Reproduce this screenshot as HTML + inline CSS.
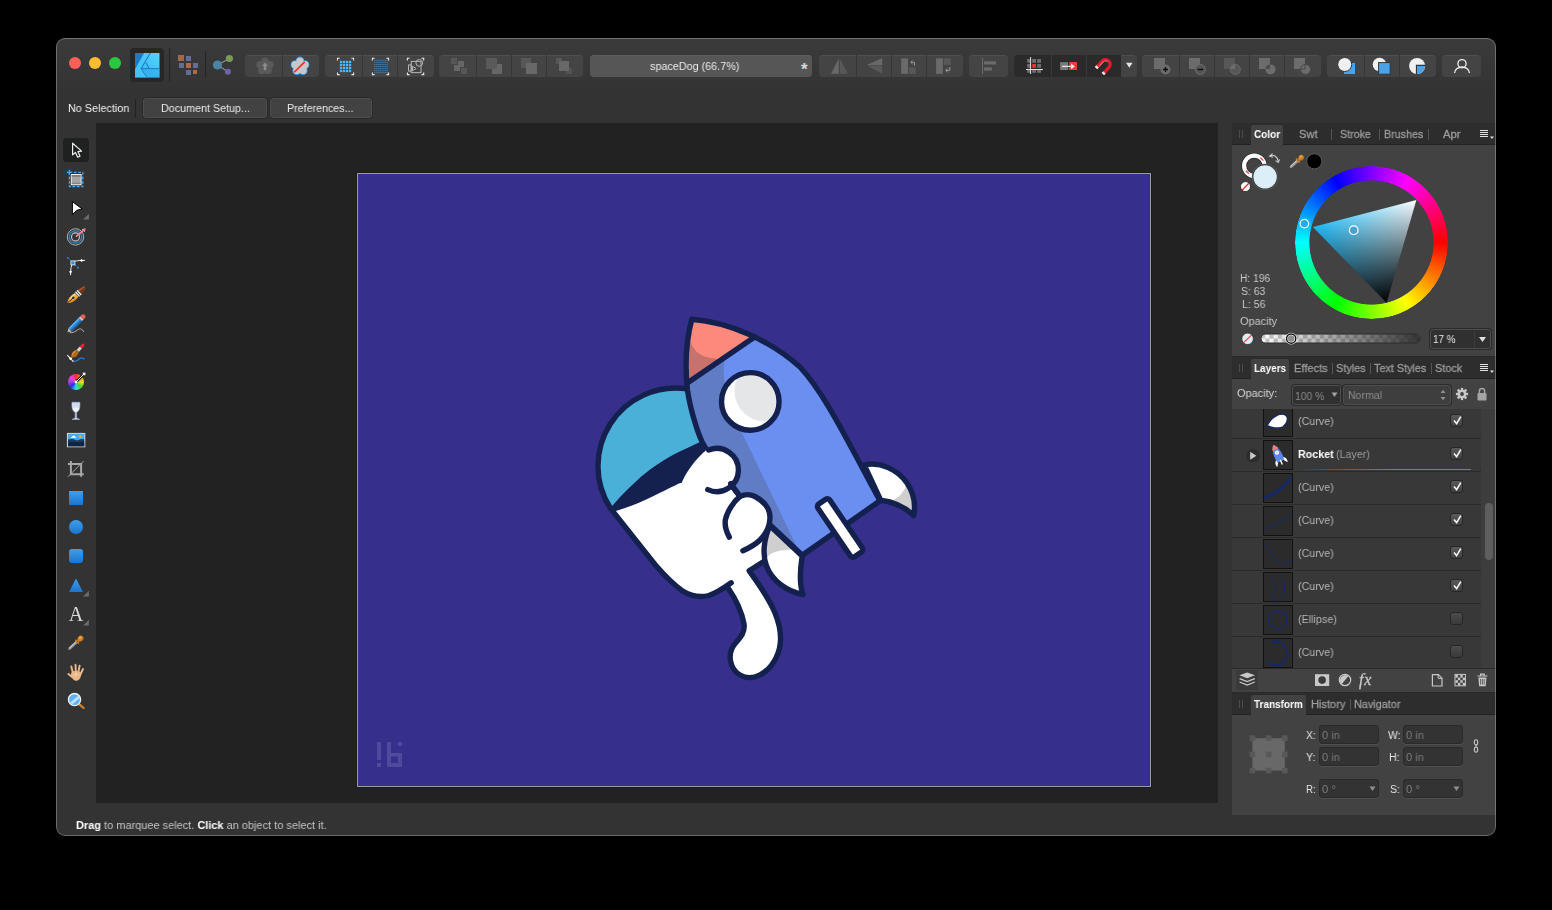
<!DOCTYPE html>
<html><head><meta charset="utf-8">
<style>
*{box-sizing:border-box;margin:0;padding:0}
html,body{width:1552px;height:910px;background:#000;overflow:hidden}
body{font-family:"Liberation Sans",sans-serif;font-size:11px;color:#d4d4d4;position:relative}
.abs{position:absolute}
svg{will-change:transform}
#win{position:absolute;left:56px;top:38px;width:1440px;height:798px;border-radius:9px;background:#333;overflow:hidden}
#win:after{content:"";position:absolute;inset:0;border-radius:9px;border:1px solid rgba(255,255,255,.28);pointer-events:none;z-index:50}
/* all children of #pg use page coords via translate */
#pg{position:absolute;left:-56px;top:-38px;width:1552px;height:910px}
#tbar{left:56px;top:38px;width:1440px;height:56px;background:linear-gradient(#3b3b3b,#333)}
.tl{width:12px;height:12px;border-radius:50%;top:57px}
.grp{top:55px;height:22px;background:#434343;border-radius:4px;box-shadow:inset 0 1px 0 rgba(255,255,255,.06)}
.dv{top:55px;width:1px;height:22px;background:#363636}
.btn{top:98px;height:20px;background:#424242;border:1px solid #4d4d4d;border-radius:3px;color:#ececec;text-align:center;line-height:18px;font-size:11px;box-shadow:0 0 0 1px #2a2a2a}
#canvas{left:96px;top:123px;width:1122px;height:680px;background:#222}
#artb{left:357px;top:173px;width:794px;height:614px;background:#362f8c;border:1px solid #9c9ca0;box-shadow:0 0 0 1px #1a1a1a}
#rp{left:1232px;top:123px;width:264px;height:692px;background:#424242}
.tabbar{left:1232px;width:264px;height:22px;background:#2d2d2d;border-bottom:1px solid #222}
.tab{height:20px;background:#424242;color:#fff;font-weight:bold}
.tt{font-size:11px;color:#a9a9a9;white-space:nowrap;line-height:12px}
.tsep{width:1px;height:11px;background:#555}
.inp{background:#303030;border:1px solid #4e4e4e;border-radius:3px;box-shadow:0 0 0 1px #2b2b2b;color:#8a8a8a;font-size:11px;line-height:17px;padding-left:4px;white-space:nowrap}
.tx{font-size:11.25px;line-height:12px;white-space:pre;will-change:transform;transform-origin:0 0}
.lbl{font-size:11px;color:#d0d0d0;white-space:nowrap;line-height:12px}
.row{left:1232px;width:249px;height:33px;border-bottom:1px solid #2c2c2c}
.th{left:1263px;width:30px;height:30px;background:#2b2b2b;border:1px solid #111}
.ck{left:1450px;width:13px;height:13px;border-radius:3px;background:linear-gradient(#5a5a5a,#404040);border:1px solid #262626}
</style></head><body>
<div id="win"><div id="pg">
<div id="tbar" class="abs"></div>
<div class="abs tl" style="left:69px;background:#fe5f57"></div>
<div class="abs tl" style="left:89px;background:#febc2e"></div>
<div class="abs tl" style="left:109px;background:#28c840"></div>
<!--TBS--><div class="abs" style="left:130px;top:48px;width:34px;height:34px;background:#272727;border-radius:4px"></div>
<div class="abs" style="left:169px;top:48px;width:1px;height:34px;background:#242424"></div>
<div class="abs" style="left:205px;top:51px;width:1px;height:27px;background:#242424"></div>
<div class="abs grp" style="left:245px;width:74px;background:#444"></div>
<div class="abs dv" style="left:282px"></div>
<div class="abs grp" style="left:325px;width:109px;background:#444"></div>
<div class="abs dv" style="left:362px"></div>
<div class="abs dv" style="left:397px"></div>
<div class="abs grp" style="left:439px;width:144px;background:#444"></div>
<div class="abs dv" style="left:476px"></div>
<div class="abs dv" style="left:511px"></div>
<div class="abs dv" style="left:546px"></div>
<div class="abs grp" style="left:590px;width:222px;background:#565656;color:#ececec;font-size:11px;line-height:22px;text-align:center"><span class="abs" style="right:4.5px;top:3.5px;font-size:17px;color:#d8d8d8;line-height:22px;font-weight:bold">*</span></div>
<div class="abs grp" style="left:819px;width:144px;background:#444"></div>
<div class="abs dv" style="left:856px"></div>
<div class="abs dv" style="left:891px"></div>
<div class="abs dv" style="left:926px"></div>
<div class="abs grp" style="left:969px;width:39px;background:#444"></div>
<div class="abs grp" style="left:1014px;width:123px;background:#434343"></div><div class="abs" style="left:1014px;top:55px;width:107px;height:22px;background:#2a2a2a;border-radius:4px 0 0 4px"></div>
<div class="abs dv" style="left:1051px;background:#3a3a3a"></div>
<div class="abs dv" style="left:1086px;background:#3a3a3a"></div>
<div class="abs grp" style="left:1142px;width:179px;background:#444"></div>
<div class="abs dv" style="left:1179px"></div>
<div class="abs dv" style="left:1214px"></div>
<div class="abs dv" style="left:1249px"></div>
<div class="abs dv" style="left:1284px"></div>
<div class="abs grp" style="left:1327px;width:109px;background:#444"></div>
<div class="abs dv" style="left:1364px"></div>
<div class="abs dv" style="left:1399px"></div>
<div class="abs grp" style="left:1442px;width:39px;background:#444"></div>
<svg class="abs" style="left:0;top:0" width="1552" height="95" viewBox="0 0 1552 95">
<defs><linearGradient id="afg" x1="0" y1="1" x2="1" y2="0"><stop offset="0" stop-color="#2fb2ef"/><stop offset="1" stop-color="#55d4fc"/></linearGradient></defs>
<g transform="translate(135,53)"><rect width="24.5" height="24.5" fill="url(#afg)"/><path d="M0,0H9.2L0,16.5Z" fill="#1c7bc9"/><path d="M9.2,0H15.2L6.1,15.7L12,24.5H0V16.5Z" fill="#4ccbfb" opacity=".55"/><path d="M15.2,0L6.1,15.7L12,24.5M6.1,15.7H24.5M10.8,9.6L14.1,15.3" fill="none" stroke="#1a6fbe" stroke-width="1"/><path d="M6.1,15.7H24.5V24.5H12Z" fill="#2aaaea" opacity=".5"/></g>
<rect x="178" y="55" width="6" height="6" fill="#a5664a"/>
<rect x="186" y="56" width="5" height="5" fill="#666c98"/>
<rect x="179" y="63" width="5" height="5" fill="#666c98"/>
<rect x="186" y="63" width="5" height="5" fill="#b0694a"/>
<rect x="193" y="63" width="5" height="5" fill="#666c98"/>
<rect x="186" y="70" width="5" height="5" fill="#666c98"/>
<rect x="193" y="70" width="4" height="4" fill="#b0694a"/>
<path d="M217.5,65L229.4,58.5M217.5,65L227.9,71.8" stroke="#a8a8a8" stroke-width="1"/><circle cx="217.5" cy="65" r="4.6" fill="#4a84a3"/><circle cx="229.4" cy="58.5" r="3.6" fill="#7a9a5c"/><circle cx="227.9" cy="71.8" r="3" fill="#6b65a8"/>
<g fill="#5a5a5a"><circle cx="265.0" cy="61.1" r="3.7"/><circle cx="269.9" cy="64.7" r="3.7"/><circle cx="268.1" cy="70.5" r="3.7"/><circle cx="261.9" cy="70.5" r="3.7"/><circle cx="260.1" cy="64.7" r="3.7"/><circle cx="265" cy="66.3" r="5"/></g>
<path d="M265,62.4l2.8,3.6h-1.6v4.2h-2.4v-4.2h-1.6z" fill="#8c8c8c"/>
<g fill="#c8c8c8" stroke="#2e8de0" stroke-width="1.7"><circle cx="300.0" cy="61.1" r="3.7"/><circle cx="304.9" cy="64.7" r="3.7"/><circle cx="303.1" cy="70.5" r="3.7"/><circle cx="296.9" cy="70.5" r="3.7"/><circle cx="295.1" cy="64.7" r="3.7"/><circle cx="300" cy="66.3" r="5"/></g><g fill="#c8c8c8"><circle cx="300.0" cy="61.1" r="3.7"/><circle cx="304.9" cy="64.7" r="3.7"/><circle cx="303.1" cy="70.5" r="3.7"/><circle cx="296.9" cy="70.5" r="3.7"/><circle cx="295.1" cy="64.7" r="3.7"/><circle cx="300" cy="66.3" r="5"/></g>
<path d="M294.2,72.3L304.7,61.9" stroke="#f02a2a" stroke-width="1.6"/>
<path d="M337.5,60.400000000000006v-2.2h2.2 M351.40000000000003,58.2h2.2v2.2 M353.6,72.39999999999999v2.2h-2.2 M339.7,74.6h-2.2v-2.2" fill="none" stroke="#e8e8e8" stroke-width="1.1"/>
<rect x="339.9" y="60.8" width="2.3" height="2.3" fill="#4db8ff"/>
<rect x="339.9" y="63.8" width="2.3" height="2.3" fill="#4db8ff"/>
<rect x="339.9" y="66.8" width="2.3" height="2.3" fill="#4db8ff"/>
<rect x="339.9" y="69.8" width="2.3" height="2.3" fill="#4db8ff"/>
<rect x="342.9" y="60.8" width="2.3" height="2.3" fill="#4db8ff"/>
<rect x="342.9" y="63.8" width="2.3" height="2.3" fill="#4db8ff"/>
<rect x="342.9" y="66.8" width="2.3" height="2.3" fill="#4db8ff"/>
<rect x="342.9" y="69.8" width="2.3" height="2.3" fill="#4db8ff"/>
<rect x="345.9" y="60.8" width="2.3" height="2.3" fill="#4db8ff"/>
<rect x="345.9" y="63.8" width="2.3" height="2.3" fill="#4db8ff"/>
<rect x="345.9" y="66.8" width="2.3" height="2.3" fill="#4db8ff"/>
<rect x="345.9" y="69.8" width="2.3" height="2.3" fill="#4db8ff"/>
<rect x="348.9" y="60.8" width="2.3" height="2.3" fill="#4db8ff"/>
<rect x="348.9" y="63.8" width="2.3" height="2.3" fill="#4db8ff"/>
<rect x="348.9" y="66.8" width="2.3" height="2.3" fill="#4db8ff"/>
<rect x="348.9" y="69.8" width="2.3" height="2.3" fill="#4db8ff"/>
<path d="M372.4,60.400000000000006v-2.2h2.2 M386.40000000000003,58.2h2.2v2.2 M388.6,72.39999999999999v2.2h-2.2 M374.59999999999997,74.6h-2.2v-2.2" fill="none" stroke="#e8e8e8" stroke-width="1.1"/>
<rect x="374.3" y="59.9" width="1" height="1" fill="#3a94d8"/>
<rect x="374.3" y="61.9" width="1" height="1" fill="#3a94d8"/>
<rect x="374.3" y="64.0" width="1" height="1" fill="#3a94d8"/>
<rect x="374.3" y="66.0" width="1" height="1" fill="#3a94d8"/>
<rect x="374.3" y="68.1" width="1" height="1" fill="#3a94d8"/>
<rect x="374.3" y="70.2" width="1" height="1" fill="#3a94d8"/>
<rect x="374.3" y="72.2" width="1" height="1" fill="#3a94d8"/>
<rect x="376.4" y="59.9" width="1" height="1" fill="#3a94d8"/>
<rect x="376.4" y="61.9" width="1" height="1" fill="#3a94d8"/>
<rect x="376.4" y="64.0" width="1" height="1" fill="#3a94d8"/>
<rect x="376.4" y="66.0" width="1" height="1" fill="#3a94d8"/>
<rect x="376.4" y="68.1" width="1" height="1" fill="#3a94d8"/>
<rect x="376.4" y="70.2" width="1" height="1" fill="#3a94d8"/>
<rect x="376.4" y="72.2" width="1" height="1" fill="#3a94d8"/>
<rect x="378.4" y="59.9" width="1" height="1" fill="#3a94d8"/>
<rect x="378.4" y="61.9" width="1" height="1" fill="#3a94d8"/>
<rect x="378.4" y="64.0" width="1" height="1" fill="#3a94d8"/>
<rect x="378.4" y="66.0" width="1" height="1" fill="#3a94d8"/>
<rect x="378.4" y="68.1" width="1" height="1" fill="#3a94d8"/>
<rect x="378.4" y="70.2" width="1" height="1" fill="#3a94d8"/>
<rect x="378.4" y="72.2" width="1" height="1" fill="#3a94d8"/>
<rect x="380.4" y="59.9" width="1" height="1" fill="#3a94d8"/>
<rect x="380.4" y="61.9" width="1" height="1" fill="#3a94d8"/>
<rect x="380.4" y="64.0" width="1" height="1" fill="#3a94d8"/>
<rect x="380.4" y="66.0" width="1" height="1" fill="#3a94d8"/>
<rect x="380.4" y="68.1" width="1" height="1" fill="#3a94d8"/>
<rect x="380.4" y="70.2" width="1" height="1" fill="#3a94d8"/>
<rect x="380.4" y="72.2" width="1" height="1" fill="#3a94d8"/>
<rect x="382.5" y="59.9" width="1" height="1" fill="#3a94d8"/>
<rect x="382.5" y="61.9" width="1" height="1" fill="#3a94d8"/>
<rect x="382.5" y="64.0" width="1" height="1" fill="#3a94d8"/>
<rect x="382.5" y="66.0" width="1" height="1" fill="#3a94d8"/>
<rect x="382.5" y="68.1" width="1" height="1" fill="#3a94d8"/>
<rect x="382.5" y="70.2" width="1" height="1" fill="#3a94d8"/>
<rect x="382.5" y="72.2" width="1" height="1" fill="#3a94d8"/>
<rect x="384.6" y="59.9" width="1" height="1" fill="#3a94d8"/>
<rect x="384.6" y="61.9" width="1" height="1" fill="#3a94d8"/>
<rect x="384.6" y="64.0" width="1" height="1" fill="#3a94d8"/>
<rect x="384.6" y="66.0" width="1" height="1" fill="#3a94d8"/>
<rect x="384.6" y="68.1" width="1" height="1" fill="#3a94d8"/>
<rect x="384.6" y="70.2" width="1" height="1" fill="#3a94d8"/>
<rect x="384.6" y="72.2" width="1" height="1" fill="#3a94d8"/>
<rect x="386.6" y="59.9" width="1" height="1" fill="#3a94d8"/>
<rect x="386.6" y="61.9" width="1" height="1" fill="#3a94d8"/>
<rect x="386.6" y="64.0" width="1" height="1" fill="#3a94d8"/>
<rect x="386.6" y="66.0" width="1" height="1" fill="#3a94d8"/>
<rect x="386.6" y="68.1" width="1" height="1" fill="#3a94d8"/>
<rect x="386.6" y="70.2" width="1" height="1" fill="#3a94d8"/>
<rect x="386.6" y="72.2" width="1" height="1" fill="#3a94d8"/>
<path d="M407.4,60.400000000000006v-2.2h2.2 M421.5,58.2h2.2v2.2 M423.7,72.39999999999999v2.2h-2.2 M409.59999999999997,74.6h-2.2v-2.2" fill="none" stroke="#e8e8e8" stroke-width="1.1"/>
<g fill="none" stroke="#b4b4b4" stroke-width="1"><rect x="411.2" y="61.4" width="9.8" height="11.2"/><circle cx="419.3" cy="62.9" r="3.4"/><path d="M408.5,64.8h2.7v6.4h-2.7zM412.5,66.2l3.6,2.3l-3.6,2.3z"/></g>
<rect x="451" y="58" width="6" height="6" fill="#575757"/>
<rect x="461" y="68" width="6" height="6" fill="#575757"/>
<rect x="458" y="61" width="6" height="6" fill="#666"/>
<rect x="454" y="65" width="6" height="6" fill="#666"/>
<rect x="492" y="64" width="10" height="10" fill="#666"/>
<rect x="486" y="58" width="11" height="11" fill="#5a5a5a"/>
<rect x="521" y="58" width="10" height="10" fill="#575757"/>
<rect x="526" y="63" width="11" height="11" fill="#686868"/>
<rect x="556" y="58" width="6" height="6" fill="#575757"/>
<rect x="566" y="68" width="6" height="6" fill="#525252"/>
<rect x="559" y="61" width="10" height="10" fill="#686868"/>
<path d="M831.1,73.8L838.8,58.4V73.8Z" fill="#686868"/><path d="M839.8,58.4L847.8,73.8H839.8Z" fill="#585858"/>
<path d="M866.8,65L882.2,58V65Z" fill="#686868"/><path d="M866.8,65.6H882.2V73.8Z" fill="#585858"/>
<rect x="901.2" y="58.4" width="6.8" height="15.4" fill="#6a6a6a"/>
<rect x="908.9" y="67.4" width="6.8" height="6.4" fill="#585858"/>
<path d="M914.5,65.5v-3.2h-3.4M912.6,60.6l-1.8,1.7l1.8,1.7" fill="none" stroke="#9a9a9a" stroke-width="1"/>
<rect x="936.1" y="58.4" width="6.8" height="15.4" fill="#6a6a6a"/>
<rect x="943.8" y="58.4" width="7" height="6.4" fill="#585858"/>
<path d="M949.8,67v3.4h-4M947.6,68.7l-1.9,1.7l1.9,1.7" fill="none" stroke="#9a9a9a" stroke-width="1"/>
<rect x="982" y="58" width="1" height="16" fill="#6a6a6a"/>
<rect x="984" y="61.3" width="12" height="3.2" fill="#6a6a6a"/>
<rect x="984" y="67.4" width="7.8" height="3.2" fill="#6a6a6a"/>
<rect x="1027.2" y="59" width="3.8" height="3.8" fill="#6e6e6e"/>
<rect x="1027.2" y="64" width="3.8" height="3.8" fill="#6e6e6e"/>
<rect x="1027.2" y="69" width="3.8" height="3.8" fill="#6e6e6e"/>
<rect x="1032.2" y="59" width="3.8" height="3.8" fill="#6e6e6e"/>
<rect x="1032.2" y="64" width="3.8" height="3.8" fill="#f03030"/>
<rect x="1032.2" y="69" width="3.8" height="3.8" fill="#6e6e6e"/>
<rect x="1037.2" y="59" width="3.8" height="3.8" fill="#6e6e6e"/>
<rect x="1037.2" y="64" width="3.8" height="3.8" fill="#6e6e6e"/>
<rect x="1037.2" y="69" width="3.8" height="3.8" fill="#6e6e6e"/>
<rect x="1030.1" y="57" width="1" height="17" fill="#e0e0e0"/>
<rect x="1026" y="69" width="17" height="1" fill="#e0e0e0"/>
<rect x="1060.1" y="62.2" width="8" height="7.8" fill="#7a7a7a"/>
<rect x="1069.2" y="62" width="7.8" height="8" fill="#f03a3a"/>
<path d="M1062,66.4H1072" stroke="#e8e8e8" stroke-width="1.2"/><path d="M1071,63.6l4,2.8l-4,2.8z" fill="#e8e8e8"/>
<g transform="translate(1104.5,65.5) rotate(42)"><path d="M-4.6,7.5V-1.5A4.6,4.6 0 0 1 4.6,-1.5V7.5" fill="none" stroke="#e01c2e" stroke-width="3.4"/><path d="M-4.6,7.6v-2.4M4.6,7.6v-2.4" stroke="#e4e4e4" stroke-width="3.4"/><path d="M-3.4,4V-1.5A3.4,3.4 0 0 1 0,-4.9" fill="none" stroke="#f46a74" stroke-width="1"/></g>
<path d="M1126,62.7h6.6l-3.3,5z" fill="#e4e4e4"/>
<rect x="1154" y="58" width="11" height="11" fill="#6c6c6c"/>
<circle cx="1165.5" cy="69.5" r="5" fill="#6c6c6c"/><path d="M1163,69.5h5M1165.5,67v5" stroke="#0c0c0c" stroke-width="1.3"/>
<rect x="1189" y="58" width="11" height="11" fill="#6c6c6c"/>
<circle cx="1200.4" cy="69.5" r="5" fill="#555" stroke="#6c6c6c" stroke-width="1"/><path d="M1197.7,69.5h5.4" stroke="#0c0c0c" stroke-width="1.5"/>
<rect x="1224" y="58" width="11" height="11" fill="#575757"/>
<circle cx="1235.3" cy="69.4" r="5" fill="#575757" stroke="#6a6a6a" stroke-width="1"/><path d="M1235,64.4V69H1230.4A5,5 0 0 1 1235,64.4Z" fill="#6e6e6e"/>
<rect x="1259" y="58" width="11" height="11" fill="#6c6c6c"/>
<circle cx="1270.5" cy="69.4" r="5" fill="#6c6c6c"/><path d="M1270,64.4V69H1265.5A5,5 0 0 1 1270,64.4Z" fill="#4c4c4c"/>
<rect x="1294" y="58" width="11" height="11" fill="#6c6c6c"/>
<circle cx="1305.5" cy="69.4" r="5" fill="#6c6c6c" stroke="#484848" stroke-width="1"/><path d="M1300.5,69H1305V64.4" fill="none" stroke="#484848" stroke-width="1"/>
<rect x="1344" y="63" width="11" height="11" fill="#4aa3e8"/>
<circle cx="1344.7" cy="64.5" r="7" fill="#f0f0f0" stroke="#333" stroke-width="1"/>
<circle cx="1379.5" cy="64.5" r="6.8" fill="#f0f0f0"/><rect x="1378.6" y="62.6" width="11.6" height="11.6" fill="#4aa3e8" stroke="#333" stroke-width="1"/>
<circle cx="1417.1" cy="66" r="8" fill="#f0f0f0"/><path d="M1417.1,66H1425.1A8,8 0 0 1 1417.1,74Z" fill="#4aa3e8"/><path d="M1416.5,74V65.4H1425.1" fill="none" stroke="#333" stroke-width="1.2"/>
<g fill="none" stroke="#f0f0f0" stroke-width="1.3"><circle cx="1462" cy="63.7" r="4.1"/><path d="M1454.6,73A7.4,6 0 0 1 1469.4,73"/></g>
</svg><!--TBE-->
<!--CONTEXT-->
<div class="abs" style="left:135px;top:99px;width:1px;height:19px;background:#222"></div>
<div class="abs btn" style="left:143px;width:124px"></div>
<div class="abs btn" style="left:270px;width:102px"></div>
<div id="canvas" class="abs"></div>
<div id="artb" class="abs"></div>
<!--ARTS--><svg class="abs" style="left:0;top:0" width="1552" height="910" viewBox="0 0 1552 910">
<defs><clipPath id="rk"><path d="M691.8,319.3 C728,322 770,340 800,367 C825,394 846,438 880,500.8 L802.2,555.3 C781,535 758,514 740,496.4 C731,485 713,462 702,441.7 C697,431 690,408 687.4,389.6 C685.5,372 685,345 691.8,319.3Z"/></clipPath><clipPath id="wn"><circle cx="750.3" cy="401.4" r="28.8"/></clipPath><clipPath id="fr"><path d="M864.2,465 C880,461 898,470 907,483 C913,492 916,504 913.6,515.6 C906,508 895,502 880.7,500.2Z"/></clipPath><clipPath id="fl"><path d="M770,525.7 C764,538 762,554 766.5,566 C772,581 787,591.5 803,594.6 C799,584 800,570 802.2,556Z"/></clipPath></defs>
<g fill="#4f4a9c"><rect x="377" y="742" width="4" height="18"/><rect x="377" y="763" width="4" height="4"/><path d="M387,742h4v11h11v14h-15zM391,756.5v6.5h7v-6.5z" fill-rule="evenodd"/><rect x="398" y="742" width="4" height="4"/></g>
<path d="M610.4,508.3 L655,564.5 C664,575 672,583.5 682.2,590.7 C690,595.5 699,598 708.8,595.5 C717,593 724,588 731.2,582.8 L727.5,587 C735,598 742,612 744,624 C745.5,634 738,640 734,645 C727,655 730,669 740,675 C752,682 768,674 776,658 C783,644 782,630 775,613 C769,598 758,583 749.2,570.8 L765,560 L790,540 L730,450 L700,444 Z" fill="#fff"/>
<path d="M687,388.8 A78,78 0 0 0 610.4,508.3 C622,494 640,477 650,469.7 C662,461 675,453.5 685,449.3 C692,446 700,442 712,437 L696,388Z" fill="#4ab0d8"/>
<path d="M610.4,508.3 C622,494 640,477 650,469.7 C662,461 675,453.5 685,449.3 C692,446 700,442 712,437 L700,481 C690,482 684,481.5 678.8,483.6 C668,489 650,498 639,502.8 C630,506.5 622,509 611,512.5 Z" fill="#14214f"/>
<g fill="none" stroke="#14214f" stroke-width="5.4" stroke-linecap="round" stroke-linejoin="round">
<path d="M687,388.8 A78,78 0 0 0 610.4,508.3 L655,564.5 C664,575 672,583.5 682.2,590.7 C690,595.5 699,598 708.8,595.5 C717,593 724,588 731.2,582.8"/>
<path d="M727.5,587 C735,598 742,612 744,624 C745.5,634 738,640 734,645 C727,655 730,669 740,675 C752,682 768,674 776,658 C783,644 782,630 775,613 C769,598 758,583 749.2,570.8 L764.5,561"/>
</g>
<path d="M864.2,465 C880,461 898,470 907,483 C913,492 916,504 913.6,515.6 C906,508 895,502 880.7,500.2Z" fill="#fff"/>
<path d="M907,483 C903,495 897,500.5 886,501 L902,506 L913.6,515.6 L920,500Z" fill="#cfcfcf" clip-path="url(#fr)"/>
<path d="M864.2,465 C880,461 898,470 907,483 C913,492 916,504 913.6,515.6 C906,508 895,502 880.7,500.2Z" fill="none" stroke="#14214f" stroke-width="5.4" stroke-linejoin="round"/>
<path d="M770,525.7 C764,538 762,554 766.5,566 C772,581 787,591.5 803,594.6 C799,584 800,570 802.2,556Z" fill="#fff"/>
<path d="M765,562 C768,553 775,550.5 792,549.5 L805,540 L765,528Z" fill="#cfcfcf" clip-path="url(#fl)"/>
<path d="M770,525.7 C764,538 762,554 766.5,566 C772,581 787,591.5 803,594.6 C799,584 800,570 802.2,556Z" fill="none" stroke="#14214f" stroke-width="5.4" stroke-linejoin="round"/>
<path d="M691.8,319.3 C728,322 770,340 800,367 C825,394 846,438 880,500.8 L802.2,555.3 C781,535 758,514 740,496.4 C731,485 713,462 702,441.7 C697,431 690,408 687.4,389.6 C685.5,372 685,345 691.8,319.3Z" fill="#6a8ff0"/>
<g clip-path="url(#rk)">
<path d="M760,330 L724.4,361 C723,368 723.5,380 727,398 C731,415 737,424 742.6,434 L796.7,546.5 L806,562 L700,560 L660,300Z" fill="#5f7cc5"/>
<path d="M680,310 L760,325 L754.6,337 L688,382.6Z" fill="#fd887c"/>
<path d="M680,330 L689,335 C691.5,349 698,357.5 716,358.6 L720,362 L687.7,384 L675,384Z" fill="#c8726d"/>
</g>
<g fill="none" stroke="#14214f" stroke-width="5.4" stroke-linecap="round" stroke-linejoin="round">
<path d="M688,382.6 L754.6,337"/>
<path d="M691.8,319.3 C728,322 770,340 800,367 C825,394 846,438 880,500.8 L802.2,555.3 C781,535 758,514 740,496.4 C731,485 713,462 702,441.7 C697,431 690,408 687.4,389.6 C685.5,372 685,345 691.8,319.3Z"/>
</g>
<circle cx="750.3" cy="401.4" r="28.8" fill="#fff"/>
<circle cx="765" cy="391" r="30.5" fill="#e5e6e8" clip-path="url(#wn)"/>
<circle cx="750.3" cy="401.4" r="28.8" fill="none" stroke="#14214f" stroke-width="5.4"/>
<rect x="-31.8" y="-7.2" width="63.6" height="14.4" rx="3" transform="translate(840.1,528) rotate(55.8)" fill="#fff" stroke="#14214f" stroke-width="5.4"/>
<path d="M681.3,484 C685,474 694,460 707.5,449 A22,22 0 1 1 707.5,489.3 L690,497Z" fill="#fff"/>
<path d="M740,496.4 C744,494.5 750,494 755,496.5 C763,500.5 770,508 770,517 C770,527 766,534 760,540 C755,545 749,548 742.9,550.7 L725,545 L724,520 L730,505Z" fill="#fff"/>
<g fill="none" stroke="#14214f" stroke-width="5.4" stroke-linecap="round" stroke-linejoin="round">
<path d="M708.6,450 A21.6,21.6 0 1 1 707.8,489.6"/><path d="M730.7,483.6 L740,496.4"/><path d="M740,496.4 C744,494.5 750,494 755,496.5 C763,500.5 770,508 770,517 C770,527 766,534 760,540 C755,545 749,548 742.9,550.7"/><path d="M740,496.4 C733,502 727,512 725.3,520 C724.6,526 726.5,532 729.3,537.1"/>
</g></svg><!--ARTE-->
<!--TLS--><div class="abs" style="left:63px;top:138px;width:26px;height:24px;background:#1f2020;border-radius:4px"></div>
<div class="abs" style="left:67.8px;top:373.8px;width:16.4px;height:16.4px;border-radius:50%;background:conic-gradient(#f03030,#f88020 12%,#e8e020 25%,#40d830 38%,#40d8e0 50%,#2030e8 63%,#a040e0 75%,#f040d0 88%,#f03030)"></div>
<svg class="abs" style="left:0;top:0" width="100" height="720" viewBox="0 0 100 720">
<defs><linearGradient id="bl" x1="0" y1="0" x2="0" y2="1"><stop offset="0" stop-color="#3d9ff0"/><stop offset="1" stop-color="#1d74cc"/></linearGradient></defs>
<path d="M72.6,143.2V154.9L75.5,152.5L77.7,157.2L80,156.2L77.9,151.6L81.6,151.1Z" fill="#1c1c1c" stroke="#ececec" stroke-width="1.2" stroke-linejoin="round"/>
<rect x="69.4" y="172.4" width="13.4" height="14.3" fill="none" stroke="#3fa9f5" stroke-width="1.3" stroke-dasharray="2.9 1.5"/><path d="M66.8,172.4h5.2M69.4,169.8v5.2" stroke="#3fa9f5" stroke-width="1.3"/>
<rect x="71.3" y="174.5" width="9.8" height="10.3" fill="#a4a4a4" stroke="#f0f0f0" stroke-width="1"/><rect x="71.8" y="175" width="8.8" height="1.8" fill="#7c7c7c"/><rect x="71.8" y="182.8" width="8.8" height="1" fill="#7c7c7c"/>
<path d="M72.4,201.7L82.2,208.9L76.8,210.3L72.4,214.5Z" fill="#fff" stroke="#000" stroke-width="1" stroke-linejoin="round"/>
<path d="M83.1,219.5h5.8v-5.8z" fill="#6c6c6c"/>
<g fill="none"><circle cx="75.5" cy="236.9" r="8.2" stroke="#b4b4b4" stroke-width="1"/><circle cx="75.5" cy="236.9" r="6.2" stroke="#2b80b8" stroke-width="1.5"/><circle cx="75.5" cy="236.9" r="4" stroke="#c4c4c4" stroke-width="1.2"/><path d="M75.8,236.6L84.6,229.4" stroke="#f28aa0" stroke-width="1.6"/><path d="M82,229.6l3.2,-0.8l-0.9,3.2" stroke="#f28aa0" stroke-width="1"/></g>
<g fill="none"><path d="M67.6,257.6L78.1,267.8" stroke="#2e8de0" stroke-width="1" stroke-dasharray="1.6 1"/><path d="M85.1,260.4H81C76,260.6 73.4,261.6 72.9,262.9C71.2,265.5 70.6,268 70.6,275.2" stroke="#f0f0f0" stroke-width="1"/></g><rect x="70.9" y="260.9" width="4" height="4" fill="#2e8de0" stroke="#f0f0f0" stroke-width=".8"/><path d="M81.6,258.9l1.6,1.5l-1.6,1.5l-1.6,-1.5zM70.6,270.2l1.5,1.6l-1.5,1.6l-1.5,-1.6z" fill="#fff"/><circle cx="67.8" cy="257.8" r=".9" fill="#2e8de0"/><circle cx="78" cy="267.7" r=".9" fill="#2e8de0"/>
<g transform="translate(67.4,303) rotate(-41.5)"><path d="M0,0C3,-2.9 7.5,-3.7 12.3,-2.6V2.6C7.5,3.7 3,2.9 0,0Z" fill="#f2ae3c"/><path d="M0,0C3,.4 7.5,.9 12.3,2.6C7.5,3.7 3,2.9 0,0Z" fill="#de8e28"/><path d="M3,-1C6,-2.5 9,-2.9 12,-2.2V-.7C8,-1.2 5,-1 3,-1Z" fill="#f8d8a4"/><path d="M0,0H7.4" stroke="#2a2a2a" stroke-width=".9"/><circle cx="8" cy="0" r="1.2" fill="#2a2a2a"/><rect x="12.8" y="-3.1" width="1.4" height="6.2" fill="#eee"/><rect x="15" y="-3.1" width="1.4" height="6.2" fill="#eee"/><path d="M17,-2.8L23.4,-1.5C24,-.6 24,.6 23.4,1.5L17,2.8Z" fill="#7a3418"/><path d="M17,-2.8L23.4,-1.5L23.6,-.5L17,-1Z" fill="#a85a3a"/></g>
<g transform="translate(67.6,332.2) rotate(-45)"><path d="M0,0L3.4,-2.3V2.3Z" fill="#f0c080"/><path d="M0,0L1.3,-.9V.9Z" fill="#2e8de0"/><rect x="3.4" y="-2.3" width="14.8" height="4.6" fill="#2a86d8"/><rect x="3.4" y="-2.3" width="14.8" height="1.5" fill="#5ab0f4"/><rect x="3.4" y="1" width="14.8" height="1.3" fill="#1a5ea8"/><rect x="18.2" y="-2.3" width="2" height="4.6" fill="#c8c8c8"/><path d="M20.2,-2.3H22A2.3,2.3 0 0 1 22,2.3H20.2Z" fill="#f06050"/></g><path d="M69.9,332.6C75,333.4 78,328.4 80.5,328.9C82,329.2 83,330.6 83.9,331.9" fill="none" stroke="#b8b8b8" stroke-width="1"/>
<path d="M67.3,355.2L73.6,361.8" stroke="#f0f0f0" stroke-width="1.1"/><circle cx="70.6" cy="358.6" r="1.3" fill="#fff"/><path d="M73.2,360.3C75,362 76.5,361.4 78,360C79.6,358.4 81.4,357.4 82.6,358.2C83.4,358.8 84.2,359 84.8,358.6" fill="none" stroke="#2a7fd0" stroke-width="1.1"/><g transform="translate(71.4,357.6) rotate(-47)"><path d="M0,0C2,-3.4 7,-3.4 9.4,-1.3V1.3C7,3.4 2,3.4 0,0Z" fill="#b06a1e"/><path d="M1.4,-.6C3,-2.6 6.6,-2.6 8.6,-1.2C6,-1.6 3.4,-1.4 1.4,-.6Z" fill="#e0a040"/><rect x="9.4" y="-1.5" width="4.4" height="3" fill="#d4d4d4"/><path d="M13.8,-1.5H17.4L18.8,0L17.4,1.5H13.8Z" fill="#e8262e"/></g>
<path d="M76,382L84.1,373.9" stroke="#1a1a1a" stroke-width="2.6" stroke-linecap="round"/><path d="M76,382L84.1,373.9" stroke="#f4f4f4" stroke-width="1"/><rect x="74.7" y="380.7" width="2.6" height="2.6" fill="#fff"/><rect x="82.8" y="372.6" width="2.6" height="2.6" fill="#fff"/>
<path d="M72,402.3H79.8C80.2,407 79.6,411.3 76.6,412.2V418.2C78,418.4 79.4,418.8 79.6,419.5H72.2C72.4,418.8 73.8,418.4 75.2,418.2V412.2C72.2,411.3 71.6,407 72,402.3Z" fill="#eef2f9" stroke="#93a6c8" stroke-width=".7"/><path d="M72.6,403H79.2C79.3,405 79.2,406 79,407.5H72.8C72.6,406 72.5,405 72.6,403Z" fill="#c4d2ea" opacity=".7"/>
<rect x="67.4" y="433.4" width="17.4" height="13.4" fill="#4aa8ea" stroke="#d6d6d6" stroke-width="1"/><path d="M68,439.6C71,438.4 74,439 77,440.6C79.6,439.4 82,438.8 84.2,439.2V446.2H68Z" fill="#1c3a5e"/><path d="M68,442.6C74,441.6 80,442.6 84.2,441.8V446.2H68Z" fill="#12243e"/><circle cx="80.4" cy="436.6" r="1.7" fill="#f5a623"/><path d="M70.6,437.8C72,436.8 72.6,435.8 73.6,435.6C74.8,435.8 75.4,436.8 76.6,437.8Z" fill="#fff"/>
<g stroke="#a8a8a8" fill="none"><path d="M70.9,461V474.3H83.7M67.9,464H81.1V476.8" stroke-width="2"/><path d="M67.9,476.8L83.7,461" stroke-width="1"/></g>
<rect x="69" y="491" width="14" height="14" fill="url(#bl)"/><circle cx="76" cy="527" r="7" fill="url(#bl)"/><rect x="69" y="549" width="14" height="14" rx="3" fill="url(#bl)"/><path d="M76,578.4L83,592H69Z" fill="url(#bl)"/>
<path d="M83.1,596.5h5.8v-5.8z" fill="#6c6c6c"/>
<text x="76" y="621.2" text-anchor="middle" font-family="Liberation Serif" font-size="20.2" fill="#dadada">A</text><path d="M83.1,625.5h5.8v-5.8z" fill="#6c6c6c"/>
<g transform="translate(68.1,650) rotate(-42.5)"><path d="M0,0L2,-1.3H11.6V1.3H2Z" fill="#9c9c9c"/><path d="M2,-1.3H11.6V-.3H2Z" fill="#c4c4c4"/><rect x="11.4" y="-2.7" width="1.8" height="5.4" rx=".6" fill="#c47a22"/><rect x="13" y="-1.4" width="2" height="2.8" fill="#b86e1e"/><ellipse cx="16.9" cy="0" rx="2.9" ry="2.7" fill="#d48a28"/><circle cx="17.2" cy="-.9" r="1.1" fill="#ecb058"/><path d="M14.6,1.6A2.9,2.7 0 0 0 19.6,1Z" fill="#a86018" opacity=".6"/></g>
<g fill="none" stroke="#e9b98c" stroke-linecap="round"><path d="M72.8,672.4L71.3,666.4M75.8,671.6L75.5,664.8M78.4,672L79.6,665.8M80.6,674L83,669" stroke-width="1.9"/><path d="M72.4,677.2L68.4,674" stroke-width="2"/></g><path d="M71.6,672C74,670.6 79,670.6 81.4,673C81.2,677 79.6,680.6 76.4,680.8C73.4,680.6 71.8,677.6 70.8,675.4Z" fill="#e9b98c"/><circle cx="75.8" cy="674.6" r="1.3" fill="#f3d3b4"/>
<path d="M79.4,704.4L83.6,708" stroke="#d8822a" stroke-width="2.2" stroke-linecap="round"/><circle cx="74.5" cy="699.6" r="6.1" fill="#5cb2f2" stroke="#f4f4f4" stroke-width="1.3"/><path d="M70.2,702.6L78.6,695.6A6,6 0 0 1 80,698L72.2,704.4Z" fill="#bfe2fb"/>
</svg><!--TLE-->
<div id="rp" class="abs"></div>
<!--PNS--><div class="abs tabbar" style="top:123px"></div>
<div class="abs" style="left:1239px;top:130px;width:1px;height:8px;background:#4c4c4c"></div><div class="abs" style="left:1242px;top:130px;width:1px;height:8px;background:#4c4c4c"></div>
<div class="abs tab" style="left:1251px;top:125px;width:32px;border-radius:2px 2px 0 0"></div>
<div class="abs tsep" style="left:1331px;top:129px"></div>
<div class="abs tsep" style="left:1379px;top:129px"></div>
<div class="abs tsep" style="left:1428px;top:129px"></div>
<svg class="abs" style="left:1479px;top:129px" width="16" height="12"><path d="M1,1.5h8M1,3.5h8M1,5.5h8M1,7.5h8" stroke="#e0e0e0" stroke-width="1"/><path d="M11,7.5h4l-2,2.6z" fill="#e0e0e0"/></svg>
<div class="abs" style="left:1295px;top:165.6px;width:153px;height:153px;border-radius:50%;background:conic-gradient(from 90deg,#f00,#ff0,#0f0,#0ff,#00f,#f0f,#f00);-webkit-mask:radial-gradient(circle,transparent 61.7px,#000 62.5px,#000 76px,transparent 76.8px);mask:radial-gradient(circle,transparent 61.7px,#000 62.5px,#000 76px,transparent 76.8px)"></div>
<svg class="abs" style="left:1232px;top:145px" width="264" height="211" viewBox="1232 145 264 211">
<defs><linearGradient id="tw" gradientUnits="userSpaceOnUse" x1="1312.8" y1="227" x2="1416.4" y2="199.9"><stop offset="0" stop-color="#fff" stop-opacity="0"/><stop offset="1" stop-color="#fff"/></linearGradient><linearGradient id="tk" gradientUnits="userSpaceOnUse" x1="1386.6" y1="302.7" x2="1363.3" y2="213.8"><stop offset="0" stop-color="#000"/><stop offset="1" stop-color="#000" stop-opacity="0"/></linearGradient><pattern id="chk" width="8.4" height="8.4" patternUnits="userSpaceOnUse" x="1261" y="334.4"><rect width="8.4" height="8.4" fill="#fff"/><rect width="4.2" height="4.2" fill="#c4c4c4"/><rect x="4.2" y="4.2" width="4.2" height="4.2" fill="#c4c4c4"/></pattern><linearGradient id="opg" x1="0" x2="1"><stop offset="0" stop-color="#3a3a3a" stop-opacity="0"/><stop offset="1" stop-color="#2a2a2a" stop-opacity=".95"/></linearGradient></defs>
<clipPath id="tric"><polygon points="1312.8,227 1416.4,199.9 1386.6,302.7"/></clipPath><g clip-path="url(#tric)"><g opacity=".999"><rect x="1300" y="190" width="130" height="120" fill="#18b4f2"/><rect x="1300" y="190" width="130" height="120" fill="url(#tw)"/><rect x="1300" y="190" width="130" height="120" fill="url(#tk)"/></g></g>
<circle cx="1304.4" cy="223.6" r="4.3" fill="#25aaea" stroke="#fff" stroke-width="1.2"/><circle cx="1353.7" cy="230.2" r="4.3" fill="#45a5d2" stroke="#fff" stroke-width="1.2"/>
<path d="M1385,297l1.6,-1.8l1.6,1.8l-1.6,1.8z" fill="none" stroke="#111" stroke-width=".8"/>
<circle cx="1254.3" cy="165.8" r="10.2" fill="none" stroke="#2a2a2a" stroke-width="5.8"/><circle cx="1254.3" cy="165.8" r="10.2" fill="none" stroke="#fff" stroke-width="4.2"/><path d="M1260.4,157.6l3,3M1246,170.8l2.8,2.8" stroke="#f03030" stroke-width="1.3"/>
<circle cx="1265.1" cy="176.9" r="13.2" fill="#5c5c5c"/><circle cx="1265.1" cy="176.9" r="12.4" fill="#2a2a2a"/><circle cx="1265.1" cy="176.9" r="11.7" fill="#dceef8"/>
<circle cx="1245.5" cy="186.6" r="5" fill="#fff" stroke="#2a2a2a" stroke-width="1"/><path d="M1242.2,189.9l6.6,-6.6" stroke="#f03030" stroke-width="1.4"/>
<path d="M1270.2,156.2C1273,153.8 1277.6,156.6 1278.2,161.2" fill="none" stroke="#cfcfcf" stroke-width="1.1"/><path d="M1272.6,153.6l-3,2.4l3.4,1.2M1275.6,160.6l2.6,1.8l1.4,-3" fill="none" stroke="#cfcfcf" stroke-width="1.1"/>
<g transform="translate(1289.6,168.2) rotate(-42.5)"><path d="M0,0L2,-1.3H10.6V1.3H2Z" fill="#9c9c9c"/><path d="M2,-1.3H10.6V-.3H2Z" fill="#c8c8c8"/><rect x="10.4" y="-2.7" width="1.8" height="5.4" rx=".6" fill="#c47a22"/><rect x="12" y="-1.4" width="2" height="2.8" fill="#b86e1e"/><ellipse cx="15.8" cy="0" rx="2.8" ry="2.6" fill="#d08628"/><circle cx="16.1" cy="-.9" r="1" fill="#e8ac58"/><path d="M13.6,1.5A2.8,2.6 0 0 0 18.4,1Z" fill="#a86018" opacity=".6"/></g>
<circle cx="1314.3" cy="161.3" r="7.6" fill="#000" stroke="#5a5a5a" stroke-width="1"/>
<circle cx="1247.6" cy="338.8" r="5.8" fill="#dceef8" stroke="#2a2a2a" stroke-width=".8"/><path d="M1243.6,342.6l8,-7.6" stroke="#f05050" stroke-width="1.3"/>
<rect x="1261" y="334" width="159.5" height="9" rx="4.5" fill="url(#chk)"/><rect x="1261" y="334" width="159.5" height="9" rx="4.5" fill="url(#opg)"/><rect x="1261" y="334" width="159.5" height="9" rx="4.5" fill="none" stroke="#2c2c2c" stroke-width="1"/>
<circle cx="1291.2" cy="338.6" r="4.6" fill="#8c8c8c" stroke="#fff" stroke-width="2.6"/><circle cx="1291.2" cy="338.6" r="4.6" fill="none" stroke="#111" stroke-width="1.4"/>
</svg>
<div class="abs inp" style="left:1430px;top:329px;width:61px;height:20px;color:#e4e4e4;line-height:18px"><span class="abs" style="left:43px;top:0;width:1px;height:18px;background:#3c3c3c"></span></div>
<svg class="abs" style="left:1478px;top:336px" width="10" height="8"><path d="M1,1h7l-3.5,5z" fill="#e0e0e0"/></svg>
<div class="abs" style="left:1232px;top:356px;width:264px;height:1px;background:#2a2a2a"></div>
<div class="abs tabbar" style="top:357px"></div>
<div class="abs" style="left:1239px;top:364px;width:1px;height:8px;background:#4c4c4c"></div><div class="abs" style="left:1242px;top:364px;width:1px;height:8px;background:#4c4c4c"></div>
<div class="abs tab" style="left:1251px;top:359px;width:38px;border-radius:2px 2px 0 0"></div>
<div class="abs tsep" style="left:1332px;top:363px"></div>
<div class="abs tsep" style="left:1370px;top:363px"></div>
<div class="abs tsep" style="left:1431px;top:363px"></div>
<svg class="abs" style="left:1479px;top:363px" width="16" height="12"><path d="M1,1.5h8M1,3.5h8M1,5.5h8M1,7.5h8" stroke="#e0e0e0" stroke-width="1"/><path d="M11,7.5h4l-2,2.6z" fill="#e0e0e0"/></svg>
<div class="abs inp" style="left:1292px;top:385px;width:49px;height:20px;line-height:19px"></div>
<svg class="abs" style="left:1331px;top:392px" width="8" height="6"><path d="M.5,.5h6l-3,4.4z" fill="#a0a0a0"/></svg>
<div class="abs inp" style="left:1343px;top:385px;width:108px;height:20px;background:#3e3e3e;line-height:18px"></div>
<svg class="abs" style="left:1439px;top:388px" width="8" height="14"><path d="M1.5,5l2.5,-3.2l2.5,3.2zM1.5,9l2.5,3.2l2.5,-3.2z" fill="#909090"/></svg>
<svg class="abs" style="left:1455px;top:387.3px" width="14" height="14" viewBox="-7 -7 14 14"><g fill="#c8c8c8"><rect x="-1.2" y="-6.1" width="2.4" height="3.2" transform="rotate(0)"/><rect x="-1.2" y="-6.1" width="2.4" height="3.2" transform="rotate(45)"/><rect x="-1.2" y="-6.1" width="2.4" height="3.2" transform="rotate(90)"/><rect x="-1.2" y="-6.1" width="2.4" height="3.2" transform="rotate(135)"/><rect x="-1.2" y="-6.1" width="2.4" height="3.2" transform="rotate(180)"/><rect x="-1.2" y="-6.1" width="2.4" height="3.2" transform="rotate(225)"/><rect x="-1.2" y="-6.1" width="2.4" height="3.2" transform="rotate(270)"/><rect x="-1.2" y="-6.1" width="2.4" height="3.2" transform="rotate(315)"/></g><circle r="4.3" fill="#c8c8c8"/><circle r="1.9" fill="#424242"/></svg>
<svg class="abs" style="left:1476px;top:387px" width="12" height="14"><rect x="1.5" y="6" width="9" height="7.4" rx="1" fill="#a4a4a4"/><path d="M3.4,6.4V4.2A2.6,2.6 0 0 1 8.6,4.2V6.4" fill="none" stroke="#a4a4a4" stroke-width="1.5"/></svg>
<div class="abs" style="left:1232px;top:409px;width:264px;height:260px;background:#3d3d3d;overflow:hidden"><div class="abs" style="left:0;top:0;width:249px;height:260px;background:#383838"></div></div>
<div class="abs" style="left:1232px;top:409px;width:264px;height:260px;overflow:hidden"><div class="abs" style="left:-1232px;top:-409px;width:1552px;height:910px">
<div class="abs" style="left:1232px;top:437.5px;width:249px;height:1px;background:#2a2a2a"></div>
<div class="abs th" style="top:407px"></div>
<div class="abs ck" style="top:413.7px;"></div>
<svg class="abs" style="left:1450.5px;top:413.5px" width="13" height="13"><path d="M3,6.6l2.6,3l4.2,-7" fill="none" stroke="#f4f4f4" stroke-width="1.6"/></svg>
<div class="abs" style="left:1232px;top:470.5px;width:249px;height:1px;background:#2a2a2a"></div>
<div class="abs th" style="top:440px"></div>
<div class="abs ck" style="top:446.7px;"></div>
<svg class="abs" style="left:1450.5px;top:446.5px" width="13" height="13"><path d="M3,6.6l2.6,3l4.2,-7" fill="none" stroke="#f4f4f4" stroke-width="1.6"/></svg>
<div class="abs" style="left:1232px;top:503.5px;width:249px;height:1px;background:#2a2a2a"></div>
<div class="abs th" style="top:473px"></div>
<div class="abs ck" style="top:479.7px;"></div>
<svg class="abs" style="left:1450.5px;top:479.5px" width="13" height="13"><path d="M3,6.6l2.6,3l4.2,-7" fill="none" stroke="#f4f4f4" stroke-width="1.6"/></svg>
<div class="abs" style="left:1232px;top:536.5px;width:249px;height:1px;background:#2a2a2a"></div>
<div class="abs th" style="top:506px"></div>
<div class="abs ck" style="top:512.7px;"></div>
<svg class="abs" style="left:1450.5px;top:512.5px" width="13" height="13"><path d="M3,6.6l2.6,3l4.2,-7" fill="none" stroke="#f4f4f4" stroke-width="1.6"/></svg>
<div class="abs" style="left:1232px;top:569.5px;width:249px;height:1px;background:#2a2a2a"></div>
<div class="abs th" style="top:539px"></div>
<div class="abs ck" style="top:545.7px;"></div>
<svg class="abs" style="left:1450.5px;top:545.5px" width="13" height="13"><path d="M3,6.6l2.6,3l4.2,-7" fill="none" stroke="#f4f4f4" stroke-width="1.6"/></svg>
<div class="abs" style="left:1232px;top:602.5px;width:249px;height:1px;background:#2a2a2a"></div>
<div class="abs th" style="top:572px"></div>
<div class="abs ck" style="top:578.7px;"></div>
<svg class="abs" style="left:1450.5px;top:578.5px" width="13" height="13"><path d="M3,6.6l2.6,3l4.2,-7" fill="none" stroke="#f4f4f4" stroke-width="1.6"/></svg>
<div class="abs" style="left:1232px;top:635.5px;width:249px;height:1px;background:#2a2a2a"></div>
<div class="abs th" style="top:605px"></div>
<div class="abs ck" style="top:611.7px;background:linear-gradient(#4c4c4c,#3a3a3a)"></div>
<div class="abs" style="left:1232px;top:668.5px;width:249px;height:1px;background:#2a2a2a"></div>
<div class="abs th" style="top:638px"></div>
<div class="abs ck" style="top:644.7px;background:linear-gradient(#4c4c4c,#3a3a3a)"></div>
</div></div>
<div class="abs" style="left:1293px;top:468.7px;width:178px;height:1.5px;background:linear-gradient(90deg,rgba(46,141,232,0),#2e8de8 55%)"></div>
<div class="abs" style="left:1485px;top:503px;width:8px;height:57px;border-radius:4px;background:#5e5e5e"></div>
<svg class="abs" style="left:1246px;top:449px" width="14" height="14"><circle cx="7" cy="6.8" r="6.8" fill="#2c2c2c"/><path d="M4.2,2.8v8l6.2,-4z" fill="#c8c8c8"/></svg>
<svg class="abs" style="left:1232px;top:409px" width="70" height="260" viewBox="1232 409 70 260"><g fill="none" stroke="#172868" stroke-linecap="round">
<path d="M1267.2,426C1270,418 1279,412.6 1284.6,414.6C1289,416.4 1288,423.4 1283,426.8C1278,430 1272,427 1267.2,426Z" fill="#fff" stroke-width="1.4"/>
<path d="M1265.6,497.6C1275,494 1284,487 1290.4,478.8" stroke-width="3.2"/>
<path d="M1264.6,528.2C1275,526 1285,520 1291.2,513.4" stroke-width="1"/>
<path d="M1264.8,544.2C1269,550 1273,556 1276.5,559.8C1279,562.6 1281,563.8 1283.2,563.4C1286,563 1289,562 1291.3,560.5" stroke-width="1"/>
<path d="M1276.5,573.8C1281,578 1284.6,583 1284.7,588C1284.8,593 1281,599 1275.8,600.5C1272.6,600.8 1271,598.6 1271.8,596.4C1272.8,593.6 1275.6,591 1276.2,588C1274.8,584.4 1272.6,580.6 1270.9,577.5" stroke-width="1"/>
<circle cx="1278" cy="619.8" r="9.2" stroke-width="1.6"/>
<path d="M1272.8,641.3C1279,640.6 1284.6,644 1287,650C1288.6,656 1286,662 1280.4,664.6C1275.4,666.6 1270.4,664.8 1267.6,661.4" stroke-width="2.2"/>
</g>
<g transform="translate(1278,455) rotate(-25)"><path d="M0,-11C4,-7 5,1 3.6,7H-3.6C-5,1 -4,-7 0,-11Z" fill="#5b86ea"/><path d="M0,-11C1.6,-9.6 2.6,-8 3.2,-6H-3.2C-2.6,-8 -1.6,-9.6 0,-11Z" fill="#f47c72"/><circle cx="0" cy="-2.6" r="2.1" fill="#fff"/><circle cx="0" cy="-2.6" r="1" fill="#cfd6e6"/><path d="M-3.8,4C-6.4,5.6 -6.6,8.4 -5.8,10.6L-3.4,7.6ZM3.8,4C6.4,5.6 6.6,8.4 5.8,10.6L3.4,7.6Z" fill="#fff"/><rect x="-.7" y="5.4" width="1.4" height="5" fill="#fff"/></g>
</svg>
<div class="abs" style="left:1232px;top:668px;width:264px;height:1px;background:#2a2a2a"></div><div class="abs" style="left:1232px;top:669px;width:264px;height:23px;background:#424242"></div>
<div class="abs" style="left:1236px;top:670px;width:22px;height:20px;background:#3a3a3a;border-radius:2px"></div>
<svg class="abs" style="left:1232px;top:669px" width="264" height="23" viewBox="1232 669 264 23"><g fill="none" stroke="#c8c8c8">
<path d="M1239.4,675.2l7.8,-2.6l7.8,2.6l-7.8,3z" fill="#c8c8c8" stroke="none"/><path d="M1239.6,678.6l7.6,3l7.6,-3M1239.6,682l7.6,3l7.6,-3" stroke-width="1.3"/>
<rect x="1315" y="674.2" width="14.2" height="11.8" fill="#c8c8c8" stroke="none"/><circle cx="1322.1" cy="680.1" r="3.8" fill="#3a3a3a" stroke="none"/>
<circle cx="1345" cy="680" r="5.7" stroke-width="1.2"/><path d="M1348.6,675.8A5.7,5.7 0 0 0 1341.4,684.4Z" fill="#c8c8c8" stroke="none"/>
<rect x="1455" y="674.4" width="10.4" height="11.4" stroke-width="1"/>
<rect x="1455.5" y="675.0" width="2.4" height="2.6" fill="#c8c8c8" stroke="none"/>
<rect x="1455.5" y="680.2" width="2.4" height="2.6" fill="#c8c8c8" stroke="none"/>
<rect x="1457.9" y="677.6" width="2.4" height="2.6" fill="#c8c8c8" stroke="none"/>
<rect x="1457.9" y="682.8" width="2.4" height="2.6" fill="#c8c8c8" stroke="none"/>
<rect x="1460.3" y="675.0" width="2.4" height="2.6" fill="#c8c8c8" stroke="none"/>
<rect x="1460.3" y="680.2" width="2.4" height="2.6" fill="#c8c8c8" stroke="none"/>
<rect x="1462.7" y="677.6" width="2.4" height="2.6" fill="#c8c8c8" stroke="none"/>
<rect x="1462.7" y="682.8" width="2.4" height="2.6" fill="#c8c8c8" stroke="none"/>
<path d="M1432.4,674.6h6l3.6,3.6v7.8h-9.6z" stroke-width="1.2"/><path d="M1438.2,674.6v3.8h3.8" stroke-width="1"/>
<path d="M1478.4,677.4h8l-.7,8.8h-6.6z" fill="#c8c8c8" stroke="none"/><path d="M1477.4,676h10M1480.6,675.6v-1.4h3.6v1.4" stroke-width="1.2"/><path d="M1480.6,679v5.6M1482.4,679v5.6M1484.2,679v5.6" stroke="#424242" stroke-width=".8"/>
</g><text x="1359" y="685.2" font-family="Liberation Serif" font-style="italic" font-size="16" letter-spacing=".8" fill="#c8c8c8" stroke="#c8c8c8" stroke-width=".3">fx</text></svg>
<div class="abs" style="left:1232px;top:692px;width:264px;height:1px;background:#2a2a2a"></div>
<div class="abs tabbar" style="top:693px"></div>
<div class="abs" style="left:1239px;top:700px;width:1px;height:8px;background:#4c4c4c"></div><div class="abs" style="left:1242px;top:700px;width:1px;height:8px;background:#4c4c4c"></div>
<div class="abs tab" style="left:1251px;top:695px;width:55px;border-radius:2px 2px 0 0"></div>
<div class="abs tsep" style="left:1350px;top:699px"></div>
<div class="abs inp" style="left:1319px;top:725px;width:60px;height:19px;background:#333;border-color:#2a2a2a;box-shadow:0 1px 0 #505050;color:#7c7c7c"></div>
<div class="abs inp" style="left:1403px;top:725px;width:60px;height:19px;background:#333;border-color:#2a2a2a;box-shadow:0 1px 0 #505050;color:#7c7c7c"></div>
<div class="abs inp" style="left:1319px;top:747px;width:60px;height:19px;background:#333;border-color:#2a2a2a;box-shadow:0 1px 0 #505050;color:#7c7c7c"></div>
<div class="abs inp" style="left:1403px;top:747px;width:60px;height:19px;background:#333;border-color:#2a2a2a;box-shadow:0 1px 0 #505050;color:#7c7c7c"></div>
<div class="abs inp" style="left:1319px;top:779px;width:60px;height:19px;background:#333;border-color:#2a2a2a;box-shadow:0 1px 0 #505050;color:#7c7c7c"></div>
<svg class="abs" style="left:1369px;top:786px" width="8" height="6"><path d="M.5,.5h6l-3,4.4z" fill="#909090"/></svg>
<div class="abs inp" style="left:1403px;top:779px;width:60px;height:19px;background:#333;border-color:#2a2a2a;box-shadow:0 1px 0 #505050;color:#7c7c7c"></div>
<svg class="abs" style="left:1453px;top:786px" width="8" height="6"><path d="M.5,.5h6l-3,4.4z" fill="#909090"/></svg>
<svg class="abs" style="left:1246px;top:732px" width="44" height="44" viewBox="1246 732 44 44"><rect x="1252.4" y="738.2" width="32.4" height="32.4" fill="#686868"/>
<rect x="1249.6" y="735.4" width="5.6" height="5.6" fill="#585858"/>
<rect x="1249.6" y="751.6" width="5.6" height="5.6" fill="#585858"/>
<rect x="1249.6" y="767.8" width="5.6" height="5.6" fill="#585858"/>
<rect x="1265.8" y="735.4" width="5.6" height="5.6" fill="#585858"/>
<rect x="1265.8" y="751.6" width="5.6" height="5.6" fill="#585858"/>
<rect x="1265.8" y="767.8" width="5.6" height="5.6" fill="#585858"/>
<rect x="1282.0" y="735.4" width="5.6" height="5.6" fill="#585858"/>
<rect x="1282.0" y="751.6" width="5.6" height="5.6" fill="#585858"/>
<rect x="1282.0" y="767.8" width="5.6" height="5.6" fill="#585858"/>
</svg>
<svg class="abs" style="left:1472px;top:738px" width="8" height="16"><g fill="none" stroke="#c4c4c4" stroke-width="1.1"><ellipse cx="4" cy="4.4" rx="1.7" ry="2.6"/><ellipse cx="4" cy="11.6" rx="1.7" ry="2.6"/><path d="M4,6v4"/></g></svg><!--PNE-->
<!--TXS--><div class="abs tx" style="left:67.8px;top:101.8px;font-weight:normal;color:#f2f2f2;font-size:11.25px;transform:scaleX(0.961);">No Selection</div>
<div class="abs tx" style="left:160.9px;top:101.8px;font-weight:normal;color:#ececec;font-size:11.25px;transform:scaleX(0.954);">Document Setup...</div>
<div class="abs tx" style="left:287.4px;top:101.8px;font-weight:normal;color:#ececec;font-size:11.25px;transform:scaleX(0.948);">Preferences...</div>
<div class="abs tx" style="left:650.4px;top:59.5px;font-weight:normal;color:#ececec;font-size:11.25px;transform:scaleX(0.959);">spaceDog (66.7%)</div>
<div class="abs tx" style="left:1253.6px;top:127.9px;font-weight:bold;color:#fff;font-size:11.25px;transform:scaleX(0.892);">Color</div>
<div class="abs tx" style="left:1298.8px;top:127.9px;font-weight:normal;color:#9c9c9c;font-size:11.25px;transform:scaleX(0.986);-webkit-text-stroke:.3px #9c9c9c">Swt</div>
<div class="abs tx" style="left:1339.8px;top:127.9px;font-weight:normal;color:#9c9c9c;font-size:11.25px;transform:scaleX(0.947);-webkit-text-stroke:.3px #9c9c9c">Stroke</div>
<div class="abs tx" style="left:1384.0px;top:127.9px;font-weight:normal;color:#9c9c9c;font-size:11.25px;transform:scaleX(0.950);-webkit-text-stroke:.3px #9c9c9c">Brushes</div>
<div class="abs tx" style="left:1442.6px;top:127.9px;font-weight:normal;color:#9c9c9c;font-size:11.25px;transform:scaleX(1.005);-webkit-text-stroke:.3px #9c9c9c">Apr</div>
<div class="abs tx" style="left:1253.6px;top:361.8px;font-weight:bold;color:#fff;font-size:11.25px;transform:scaleX(0.882);">Layers</div>
<div class="abs tx" style="left:1294.0px;top:361.8px;font-weight:normal;color:#9c9c9c;font-size:11.25px;transform:scaleX(0.986);-webkit-text-stroke:.3px #9c9c9c">Effects</div>
<div class="abs tx" style="left:1335.8px;top:361.8px;font-weight:normal;color:#9c9c9c;font-size:11.25px;transform:scaleX(0.969);-webkit-text-stroke:.3px #9c9c9c">Styles</div>
<div class="abs tx" style="left:1374.1px;top:361.8px;font-weight:normal;color:#9c9c9c;font-size:11.25px;transform:scaleX(0.961);-webkit-text-stroke:.3px #9c9c9c">Text Styles</div>
<div class="abs tx" style="left:1434.8px;top:361.8px;font-weight:normal;color:#9c9c9c;font-size:11.25px;transform:scaleX(0.967);-webkit-text-stroke:.3px #9c9c9c">Stock</div>
<div class="abs tx" style="left:1253.8px;top:697.9px;font-weight:bold;color:#fff;font-size:11.25px;transform:scaleX(0.887);">Transform</div>
<div class="abs tx" style="left:1310.8px;top:697.9px;font-weight:normal;color:#9c9c9c;font-size:11.25px;transform:scaleX(0.982);-webkit-text-stroke:.3px #9c9c9c">History</div>
<div class="abs tx" style="left:1354.0px;top:697.9px;font-weight:normal;color:#9c9c9c;font-size:11.25px;transform:scaleX(0.964);-webkit-text-stroke:.3px #9c9c9c">Navigator</div>
<div class="abs tx" style="left:1240.3px;top:272.0px;font-weight:normal;color:#c8c8c8;font-size:11.25px;transform:scaleX(0.908);">H: 196</div>
<div class="abs tx" style="left:1241.2px;top:284.9px;font-weight:normal;color:#c8c8c8;font-size:11.25px;transform:scaleX(0.928);">S: 63</div>
<div class="abs tx" style="left:1242.1px;top:297.9px;font-weight:normal;color:#c8c8c8;font-size:11.25px;transform:scaleX(0.939);">L: 56</div>
<div class="abs tx" style="left:1240.0px;top:314.6px;font-weight:normal;color:#c8c8c8;font-size:11.25px;transform:scaleX(0.973);">Opacity</div>
<div class="abs tx" style="left:1433.2px;top:332.6px;font-weight:normal;color:#e8e8e8;font-size:10.8px;transform:scaleX(0.914);">17 %</div>
<div class="abs tx" style="left:1237.1px;top:387.1px;font-weight:normal;color:#d8d8d8;font-size:11.25px;transform:scaleX(0.974);">Opacity:</div>
<div class="abs tx" style="left:1295.1px;top:389.5px;font-weight:normal;color:#8c8c8c;font-size:10.8px;transform:scaleX(0.957);">100 %</div>
<div class="abs tx" style="left:1348.0px;top:389.1px;font-weight:normal;color:#8c8c8c;font-size:11.25px;transform:scaleX(0.938);">Normal</div>
<div class="abs tx" style="left:1305.8px;top:728.8px;font-weight:normal;color:#e4e4e4;font-size:11.25px;transform:scaleX(0.921);">X:</div>
<div class="abs tx" style="left:1387.5px;top:728.8px;font-weight:normal;color:#e4e4e4;font-size:11.25px;transform:scaleX(0.923);">W:</div>
<div class="abs tx" style="left:1306.3px;top:750.7px;font-weight:normal;color:#e4e4e4;font-size:11.25px;transform:scaleX(0.929);">Y:</div>
<div class="abs tx" style="left:1389.2px;top:750.7px;font-weight:normal;color:#e4e4e4;font-size:11.25px;transform:scaleX(0.951);">H:</div>
<div class="abs tx" style="left:1306.0px;top:782.6px;font-weight:normal;color:#e4e4e4;font-size:11.25px;transform:scaleX(0.862);">R:</div>
<div class="abs tx" style="left:1390.0px;top:782.6px;font-weight:normal;color:#e4e4e4;font-size:11.25px;transform:scaleX(0.930);">S:</div>
<div class="abs tx" style="left:1322.2px;top:728.8px;font-weight:normal;color:#7c7c7c;font-size:11.25px;transform:scaleX(0.976);">0 in</div>
<div class="abs tx" style="left:1406.0px;top:728.8px;font-weight:normal;color:#7c7c7c;font-size:11.25px;transform:scaleX(0.976);">0 in</div>
<div class="abs tx" style="left:1322.2px;top:750.7px;font-weight:normal;color:#7c7c7c;font-size:11.25px;transform:scaleX(0.976);">0 in</div>
<div class="abs tx" style="left:1406.0px;top:750.7px;font-weight:normal;color:#7c7c7c;font-size:11.25px;transform:scaleX(0.976);">0 in</div>
<div class="abs tx" style="left:1322.2px;top:782.6px;font-weight:normal;color:#7c7c7c;font-size:11.25px;transform:scaleX(0.993);">0 °</div>
<div class="abs tx" style="left:1406.0px;top:782.6px;font-weight:normal;color:#7c7c7c;font-size:11.25px;transform:scaleX(0.993);">0 °</div>
<div class="abs tx" style="left:1298.1px;top:415.0px;font-weight:normal;color:#b6b6b6;font-size:11.25px;transform:scaleX(0.954);">(Curve)</div>
<div class="abs tx" style="left:1298.1px;top:481.0px;font-weight:normal;color:#b6b6b6;font-size:11.25px;transform:scaleX(0.954);">(Curve)</div>
<div class="abs tx" style="left:1298.1px;top:514.0px;font-weight:normal;color:#b6b6b6;font-size:11.25px;transform:scaleX(0.954);">(Curve)</div>
<div class="abs tx" style="left:1298.1px;top:547.0px;font-weight:normal;color:#b6b6b6;font-size:11.25px;transform:scaleX(0.954);">(Curve)</div>
<div class="abs tx" style="left:1298.1px;top:580.0px;font-weight:normal;color:#b6b6b6;font-size:11.25px;transform:scaleX(0.954);">(Curve)</div>
<div class="abs tx" style="left:1298.1px;top:613.0px;font-weight:normal;color:#b6b6b6;font-size:11.25px;transform:scaleX(0.955);">(Ellipse)</div>
<div class="abs tx" style="left:1298.1px;top:646.0px;font-weight:normal;color:#b6b6b6;font-size:11.25px;transform:scaleX(0.954);">(Curve)</div>
<div class="abs tx" style="left:1297.8px;top:448.0px;font-weight:bold;color:#fff;font-size:11.25px;transform:scaleX(0.952);">Rocket</div>
<div class="abs tx" style="left:1336.2px;top:448.0px;font-weight:normal;color:#9c9c9c;font-size:11.25px;transform:scaleX(0.948);">(Layer)</div>
<div class="abs tx" style="left:76.1px;top:818.5px;color:#c4c4c4;font-size:11.25px;transform:scaleX(0.975)"><b style="color:#fff">Drag</b> to marquee select. <b style="color:#fff">Click</b> an object to select it.</div><!--TXE-->
</div></div>
</body></html>
